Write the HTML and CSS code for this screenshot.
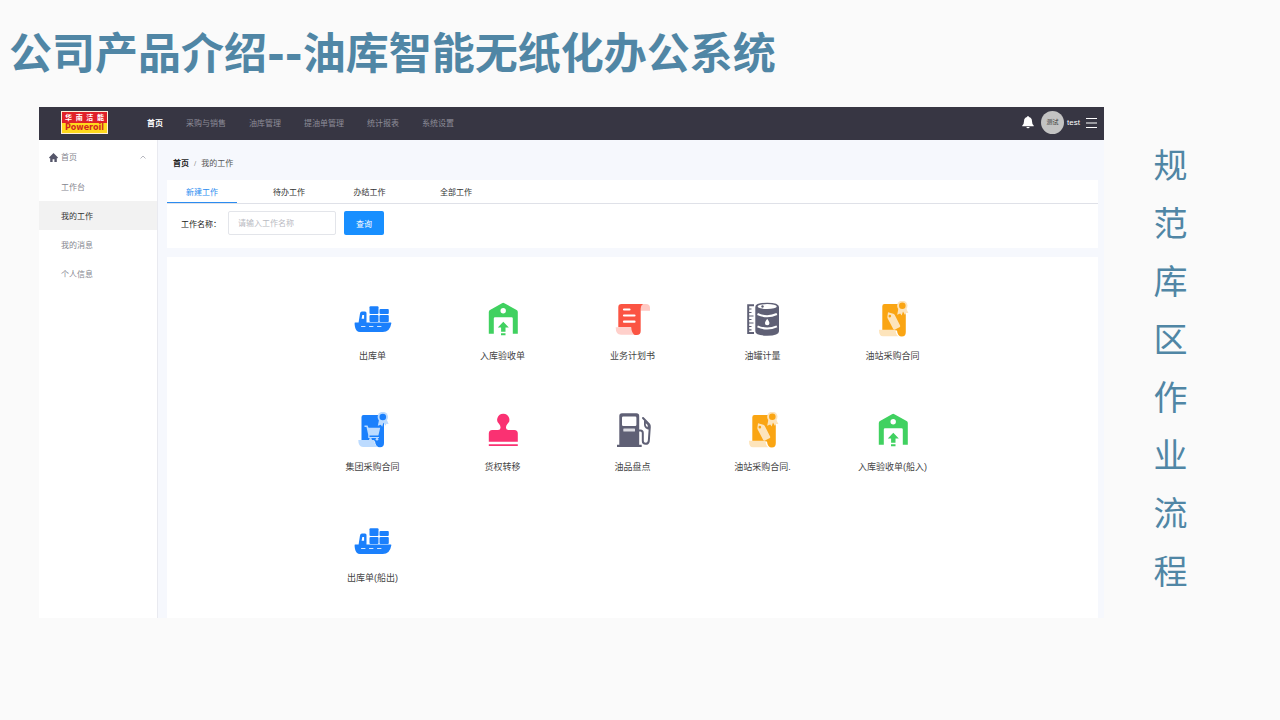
FILE: index.html
```html
<!DOCTYPE html>
<html lang="zh-CN">

<head>
    <meta charset="UTF-8">
    <meta name="viewport" content="width=device-width, initial-scale=1.0">
    <title>公司产品介绍--油库智能无纸化办公系统</title>
    <link rel="stylesheet" href="styles.css">
</head>

<body>
    <!-- icon shapes shared by the work grid -->
    <svg class="sprite" aria-hidden="true">
        <symbol id="ship" viewBox="0 0 38 38">
            <path fill="#1b80fc" fill-rule="evenodd" d="M1 21.500h3.600L6 12.500q.3-2 2-2h3q1.500 0 1.500 1.500v9.500h24.300q.8 0 .5 1-1.400 8.500-8.500 8.500H6q-4 0-5-5-.8-4.500 0-4.500zM8.300 14l-.7 3.800h2.500V14z" />
            <g fill="#1b80fc">
                <rect x="15.500" y="5.300" width="9" height="7.700" rx="1" />
                <rect x="25.500" y="8" width="9.300" height="5" rx="1" />
                <rect x="15.500" y="14" width="9" height="7" rx="1" />
                <rect x="25.500" y="14" width="9.300" height="7" rx="1" />
            </g>
            <path stroke="#d5e8ff" stroke-width="1" stroke-linecap="round" d="M7.500 25.500h3.500M15.500 25.500h3.500M23.500 25.500h3.500" />
        </symbol>
        <symbol id="warehouse" viewBox="0 0 38 38">
            <path fill="#40d160" fill-rule="evenodd" d="M18 2.200q1.200-.8 2.400 0L32.600 9q1.200.7 1.200 2v21.700h-5V17.500q0-1.200-1.200-1.200H11q-1.200 0-1.200 1.200v15.200h-5V11q0-1.300 1.200-2zM19.200 7a2.700 2.700 0 1 0 0 5.400 2.700 2.700 0 0 0 0-5.400z" />
            <path fill="#40d160" d="M19.300 20.800l5.500 5.700h-3.300v4.200h-4.400v-4.200h-3.300zM17 32.300h4.500v2H17z" />
        </symbol>
        <symbol id="plan" viewBox="0 0 38 38">
            <path fill="#ffc9c3" d="M25 3h7q4 0 4 4v2.800h-9.500z" />
            <path fill="#fb5443" d="M7.500 3H29q-2.300 1.200-2.300 4.500V30q0 4-4 4h-2q-3.700-1-3.700-5v-2.800H4.300V6.200Q4.300 3 7.500 3z" />
            <path fill="#ffd0cb" d="M1.700 26.200h15.600q0 5 3.200 7.600H7q-5.300 0-5.300-7.600z" />
            <path stroke="#fff" stroke-width="2.200" stroke-linecap="round" d="M10 8.500h5.500M10 14.500h10.500M10 20.700h10.500" />
        </symbol>
        <symbol id="tank" viewBox="0 0 38 38">
            <path fill="none" stroke="#5f6075" stroke-width="2" d="M10 4.200H4.200v27.700H10" />
            <path stroke="#5f6075" stroke-width="1.200" d="M4 8h3.500M4 11.500h3.500M4 15h5.500M4 18.500h3.500M4 22h5.500M4 25.500h3.500M4 28.800h3.500" />
            <path fill="#5f6075" d="M11.300 6q0-4.300 11.900-4.300T35 6v24.300q0 4.400-11.800 4.400T11.300 30.300z" />
            <path fill="none" stroke="#fff" stroke-width="2" d="M13.500 13q9.700 4.500 19.400 0M13.500 25.300q9.700 4.500 19.400 0" />
            <ellipse cx="23.200" cy="5.600" rx="9.600" ry="2.500" fill="#fff" />
            <circle cx="18.500" cy="5.500" r="1.200" fill="#5f6075" />
            <path fill="#fff" d="M23.200 17.700q2.300 3 2.300 4.300a2.300 2.300 0 0 1-4.600 0q0-1.300 2.300-4.300z" />
        </symbol>
        <symbol id="contract" viewBox="0 0 38 38">
            <path fill="#faa513" d="M10.500 3h21.300v28q0 4.500-4 4.500-4.300 0-4.800-6H8.300V5.200Q8.300 3 10.500 3z" />
            <path fill="#fde4bb" d="M5 28.700h16.500q.2 4.500 3 6.600H9q-4 0-4-6.600z" />
            <path fill="#fde4bb" fill-rule="evenodd" d="M14 11.200l5.300 1.500q1 .3 1.500 1.300l5.300 10.500q.5 1.200-.6 1.800l-4.500 2.300q-1.200.5-1.800-.6l-5.500-10.500q-.5-1-.3-2zM15.800 13.800a1.300 1.300 0 1 0 .1 2.600 1.300 1.300 0 0 0-.1-2.600z" />
            <path fill="#fde4bb" d="M24.500 7l-1.300 6.800 3-1.200 1.500 2 1.300-4 2 3.300 1.200-2 2.200.2L32 7z" />
            <circle cx="28.300" cy="4.800" r="5.200" fill="#fde4bb" />
            <circle cx="28.300" cy="4.800" r="3.300" fill="#faa513" />
        </symbol>
        <symbol id="group" viewBox="0 0 38 38">
            <path fill="#1b80fc" d="M9.500 3H30v28q0 4.300-4 4.300-4.500 0-5-6H7.500V5q0-2 2-2z" />
            <path fill="#bcdbff" d="M4.300 28h16q0 4.800 3.500 7H9q-4.700 0-4.700-7z" />
            <path fill="#bcdbff" d="M10.500 13.500h3l1 2.300h11.700l-1.800 7.700H15.500v1.500h9.500v1H14.200v-3.200l-1.700-7.900h-2z" />
            <circle cx="16.500" cy="27.200" r="1.300" fill="#bcdbff" />
            <circle cx="23" cy="27.200" r="1.300" fill="#bcdbff" />
            <path fill="#bcdbff" d="M25.200 7l-1.400 6.800 3-1 1.400 2 1.200-4 2.200 3 .8-2 2.200.2L32.500 7z" />
            <circle cx="28.800" cy="5" r="5.200" fill="#bcdbff" />
            <circle cx="28.800" cy="5" r="3.300" fill="#1b80fc" />
        </symbol>
        <symbol id="stamp" viewBox="0 0 38 38">
            <path fill="#fa3172" d="M19.200 1.700a6 6 0 0 1 4 10.600q-1.400 1.500-1.200 3.700.2 2 2.500 2h5.800q3.500 0 3.500 3.500v8.200h-29v-8.200q0-3.500 3.500-3.500H14q2.300 0 2.500-2 .2-2.200-1.200-3.700a6 6 0 0 1 3.900-10.600zM4.800 32.200h29v1.700h-29z" />
        </symbol>
        <symbol id="pump" viewBox="0 0 38 38">
            <path fill="#5f6075" fill-rule="evenodd" d="M8 1.200h14.500q2.700 0 2.700 2.800v28.700h2.500V35H3v-2.300h2.300V4q0-2.800 2.700-2.800zM9.200 4.500q-1.200 0-1.200 1.200v7q0 1.300 1.200 1.300h12q1.200 0 1.200-1.300v-7q0-1.200-1.200-1.200z" />
            <rect x="9.300" y="16.400" width="11.700" height="3.200" rx=".6" fill="#dcdce2" />
            <path fill="none" stroke="#5f6075" stroke-width="2" stroke-linecap="round" stroke-linejoin="round" d="M25 18.500h1.500q2.300 0 2.300 2.500v8q0 2.800 2.800 2.800t3.200-2.800l1-14q.1-1.700-.8-2.800L29 6" />
            <path fill="#5f6075" d="M30 8l5.500 5.500v4.300q-5-.8-5.500-4.800z" />
            <path fill="#fff" d="M31.800 11.200l1.800 1.800v2.200q-1.700-.7-1.800-2.200z" />
        </symbol>
    </svg>

    <h1 class="title">公司产品介绍--油库智能无纸化办公系统</h1>

    <main class="slide">
        <div class="app">
            <header class="topbar">
                <a href="#" class="logo">
                    <span class="logo-cn">华南洁能</span>
                    <span class="logo-en">Poweroil</span>
                </a>
                <nav class="nav">
                    <a href="#" class="active">首页</a>
                    <a href="#">采购与销售</a>
                    <a href="#">油库管理</a>
                    <a href="#">提油单管理</a>
                    <a href="#">统计报表</a>
                    <a href="#">系统设置</a>
                </nav>
                <div class="user">
                    <button class="icon-btn" aria-label="消息">
                        <svg width="12" height="13" viewBox="0 0 13 14" fill="#fff">
                            <path d="M6.500 0q.9 0 1 1 3.300.8 3.300 4.500 0 3.500 1.900 4.700v.8H.3v-.8q1.900-1.200 1.900-4.700Q2.200 1.800 5.500 1q.1-1 1-1zM4.700 11.800h3.600q-.3 1.500-1.800 1.500t-1.800-1.500z" />
                        </svg>
                    </button>
                    <span class="avatar">测试</span>
                    <span class="username">test</span>
                    <button class="icon-btn" aria-label="菜单">
                        <svg width="11" height="10" viewBox="0 0 11 10" fill="none" stroke="#fff">
                            <path d="M0 .5h11M0 5h11M0 9.500h11" />
                        </svg>
                    </button>
                </div>
            </header>

            <div class="body">
                <aside class="sidebar">
                    <a href="#" class="group">
                        <svg width="9" height="9" viewBox="0 0 9 9" fill="#55566a">
                            <path d="M4.500 0L9 4.500 8.500 5.200H7.800V9H5.400V6.200H3.600V9H1.200V5.200H.5L0 4.500z" />
                        </svg>
                        首页
                        <svg class="arrow" width="6" height="4" viewBox="0 0 6 4" fill="none" stroke="#a5a6b0" stroke-width=".8">
                            <path d="M.5 3.500L3 1l2.500 2.500" />
                        </svg>
                    </a>
                    <a href="#">工作台</a>
                    <a href="#" class="current">我的工作</a>
                    <a href="#">我的消息</a>
                    <a href="#">个人信息</a>
                </aside>

                <section class="content">
                    <div class="breadcrumb"><a href="#">首页</a><span>/</span>我的工作</div>

                    <div class="card">
                        <div class="tabs">
                            <button class="tab selected">新建工作</button>
                            <button class="tab tab-wide">待办工作</button>
                            <button class="tab tab-narrow">办结工作</button>
                            <button class="tab tab-wide">全部工作</button>
                        </div>
                        <form class="search">
                            <label for="work-name">工作名称：</label>
                            <input type="text" id="work-name" placeholder="请输入工作名称">
                            <button type="button">查询</button>
                        </form>
                    </div>

                    <div class="card works">
                        <a href="#"><svg><use href="#ship" /></svg>出库单</a>
                        <a href="#"><svg><use href="#warehouse" /></svg>入库验收单</a>
                        <a href="#"><svg><use href="#plan" /></svg>业务计划书</a>
                        <a href="#"><svg><use href="#tank" /></svg>油罐计量</a>
                        <a href="#"><svg><use href="#contract" /></svg>油站采购合同</a>
                        <a href="#"><svg><use href="#group" /></svg>集团采购合同</a>
                        <a href="#"><svg><use href="#stamp" /></svg>货权转移</a>
                        <a href="#"><svg><use href="#pump" /></svg>油品盘点</a>
                        <a href="#"><svg><use href="#contract" /></svg>油站采购合同.</a>
                        <a href="#"><svg><use href="#warehouse" /></svg>入库验收单(船入)</a>
                        <a href="#"><svg><use href="#ship" /></svg>出库单(船出)</a>
                    </div>
                </section>
            </div>
        </div>

        <ul class="slogan">
            <li>规</li>
            <li>范</li>
            <li>库</li>
            <li>区</li>
            <li>作</li>
            <li>业</li>
            <li>流</li>
            <li>程</li>
        </ul>
    </main>
</body>

</html>
```
FILE: styles.css
```css
* {
    box-sizing: border-box;
}

body {
    margin: 0;
    background-color: #fafafa;
    font-family: "Liberation Sans", "Noto Sans CJK SC", sans-serif;
    font-size: 8px;
    color: #333;
}

a {
    color: inherit;
    text-decoration: none;
}

button {
    font: inherit;
    border: none;
    cursor: pointer;
}

.sprite {
    display: none;
}

.title {
    margin: 0;
    padding: 22px 9px 21px;
    font-family: "DejaVu Sans", "Noto Sans CJK SC", sans-serif;
    font-size: 43px;
    line-height: 64px;
    color: #5086a5;
}

.slide {
    display: flex;
    align-items: flex-start;
    padding: 0 43px 0 39px;
}

.app {
    flex: 1;
    background-color: #f6f8fd;
}

/* top bar */
.topbar {
    display: flex;
    align-items: center;
    height: 33px;
    padding: 0 7px 2px 22px;
    background-color: #373643;
}

.logo {
    width: 47px;
    margin-right: 39px;
    padding: 1px;
    background-color: #fff0d8;
    text-align: center;
    font-weight: bold;
}

.logo span {
    display: block;
}

.logo-cn {
    background-color: #e02128;
    color: #fff;
    font-size: 7px;
    line-height: 11px;
    text-align-last: justify;
    padding: 0 3px;
}

.logo-en {
    background-color: #ffd91c;
    color: #d3281f;
    font-family: "DejaVu Sans", sans-serif;
    font-size: 8px;
    line-height: 10px;
}

.nav {
    display: flex;
    gap: 23px;
    color: #8d8d98;
}

.nav .active {
    color: #fff;
    font-weight: bold;
}

.user {
    display: flex;
    align-items: center;
    margin-left: auto;
    color: #fff;
}

.icon-btn {
    display: flex;
    padding: 0;
    background: none;
}

.avatar {
    width: 23px;
    margin: 0 3px 0 7px;
    border-radius: 50%;
    background-color: #c3c3c3;
    color: #333;
    font-size: 6px;
    line-height: 23px;
    text-align: center;
}

.username {
    margin-right: 6px;
}

/* side menu */
.body {
    display: flex;
}

.sidebar {
    width: 119px;
    background-color: #fff;
    border-right: 1px solid #e9eaf0;
    color: #85868f;
}

.sidebar a {
    display: block;
    height: 29px;
    padding-left: 22px;
    line-height: 31px;
}

.sidebar .group {
    display: flex;
    align-items: center;
    gap: 3px;
    height: 32px;
    padding: 2px 11px 0 10px;
}

.sidebar .arrow {
    margin-left: auto;
}

.sidebar .current {
    background-color: #f2f2f2;
    color: #333;
}

/* page content */
.content {
    flex: 1;
    padding: 0 6px 0 9px;
}

.breadcrumb {
    padding: 8px 6px 0;
    line-height: 32px;
    color: #555;
}

.breadcrumb a {
    color: #222;
    font-weight: bold;
}

.breadcrumb span {
    margin: 0 5px;
    color: #999;
}

.card {
    margin-bottom: 9px;
    background-color: #fff;
}

.tabs {
    display: flex;
    border-bottom: 1px solid #dfe1e8;
}

.tab {
    width: 70px;
    height: 23px;
    padding: 0;
    background: none;
    color: #333;
}

.tab-wide {
    width: 104px;
}

.tab-narrow {
    width: 57px;
}

.tab-narrow + .tab-wide {
    width: 116px;
}

.selected {
    border-bottom: 1px solid #2b8cf0;
    color: #2b8cf0;
}

.search {
    display: flex;
    align-items: center;
    gap: 8px;
    padding: 7px 14px 13px;
}

.search label {
    width: 39px;
    color: #222;
    white-space: nowrap;
}

.search input {
    width: 108px;
    height: 24px;
    padding: 0 9px;
    border: 1px solid #e3e5ea;
    border-radius: 2px;
    font: inherit;
}

.search input::placeholder {
    color: #b9bac2;
}

.search button {
    width: 40px;
    height: 24px;
    padding: 0;
    border-radius: 2px;
    background-color: #188fff;
    color: #fff;
}

.works {
    display: grid;
    grid-template-columns: repeat(5, 130px);
    row-gap: 49px;
    justify-content: center;
    margin-bottom: 0;
    padding: 44px 0 33px;
}

.works a {
    display: flex;
    flex-direction: column;
    align-items: center;
    gap: 10px;
    font-size: 9px;
    line-height: 14px;
    color: #444;
}

.works svg {
    width: 38px;
    height: 38px;
}

/* vertical text */
.slogan {
    width: 133px;
    margin: 0;
    padding: 28px 0 0;
    list-style: none;
    font-family: "Noto Sans CJK SC", sans-serif;
    font-size: 34px;
    line-height: 58px;
    text-align: center;
    color: #5086a5;
}
```
